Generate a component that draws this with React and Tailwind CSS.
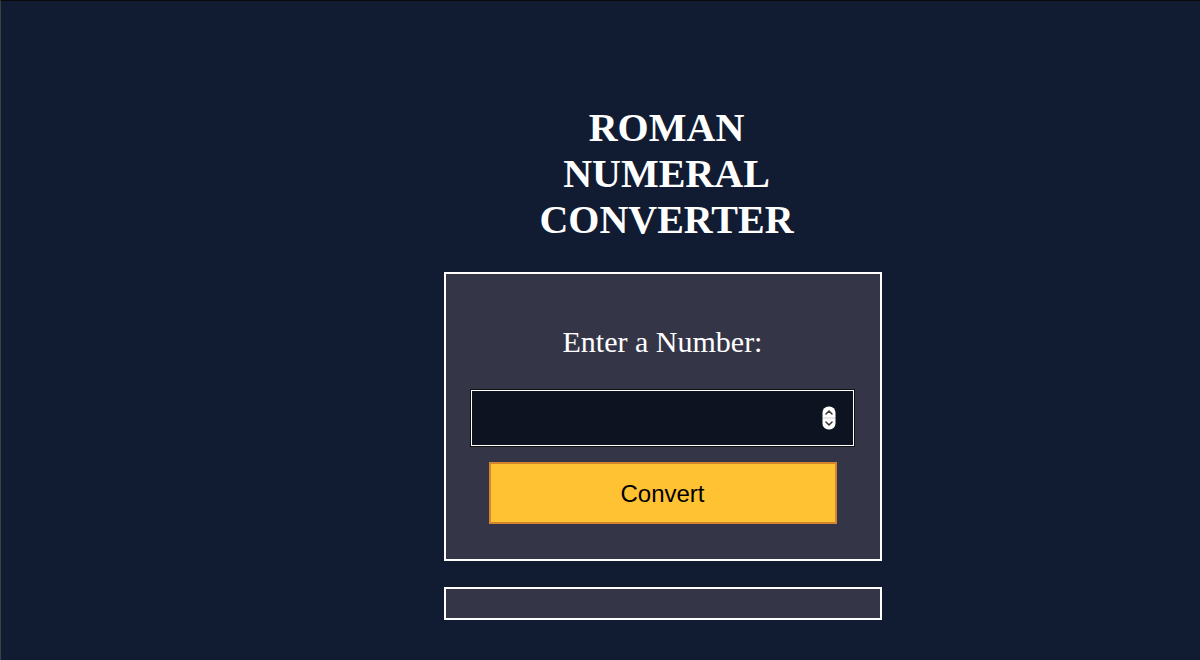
import React from "react";

function Spinner() {
  return (
    <svg width="14" height="24" viewBox="0 0 14 24" className="block">
      <rect x="0.5" y="0.5" width="13" height="23" rx="6" fill="#ffffff" />
      <line x1="1" y1="12" x2="13" y2="12" stroke="#cfcfd4" strokeWidth="1" />
      <path d="M4 8 L7 5 L10 8" fill="none" stroke="#3a3a3a" strokeWidth="1.6" strokeLinecap="round" strokeLinejoin="round" />
      <path d="M4 16 L7 19 L10 16" fill="none" stroke="#3a3a3a" strokeWidth="1.6" strokeLinecap="round" strokeLinejoin="round" />
    </svg>
  );
}

export default function App() {
  return (
    <div className="min-h-[660px] w-full bg-[#111c33] border-t border-t-[#0b0b0b] border-l border-l-[#3f3f44] flex flex-col items-center pt-[104px] pl-[124px] font-['Liberation_Serif',serif]">
      <h1 className="w-[300px] text-center text-white font-bold text-[40px] leading-[46px] pl-2">
        ROMAN NUMERAL CONVERTER
      </h1>
      <div className="mt-[29px] w-[438px] bg-[#353548] border-2 border-white flex flex-col items-center pt-[51px] pb-[35px]">
        <label className="block text-white text-[30px] leading-[34px]">Enter a Number:</label>
        <div className="mt-[31px] w-[383px] h-[56px] bg-[#0e1321] border border-white outline outline-1 outline-[#111] flex items-center justify-end pr-[17px]">
          <Spinner />
        </div>
        <button className="mt-[16px] w-[348px] h-[62px] bg-[#ffc232] border-2 border-[#d4862f] text-black text-[24px] pt-[2px] font-['Liberation_Sans',Arial,sans-serif]">
          Convert
        </button>
      </div>
      <div className="mt-[26px] w-[438px] h-[33px] bg-[#353548] border-2 border-white"></div>
    </div>
  );
}
